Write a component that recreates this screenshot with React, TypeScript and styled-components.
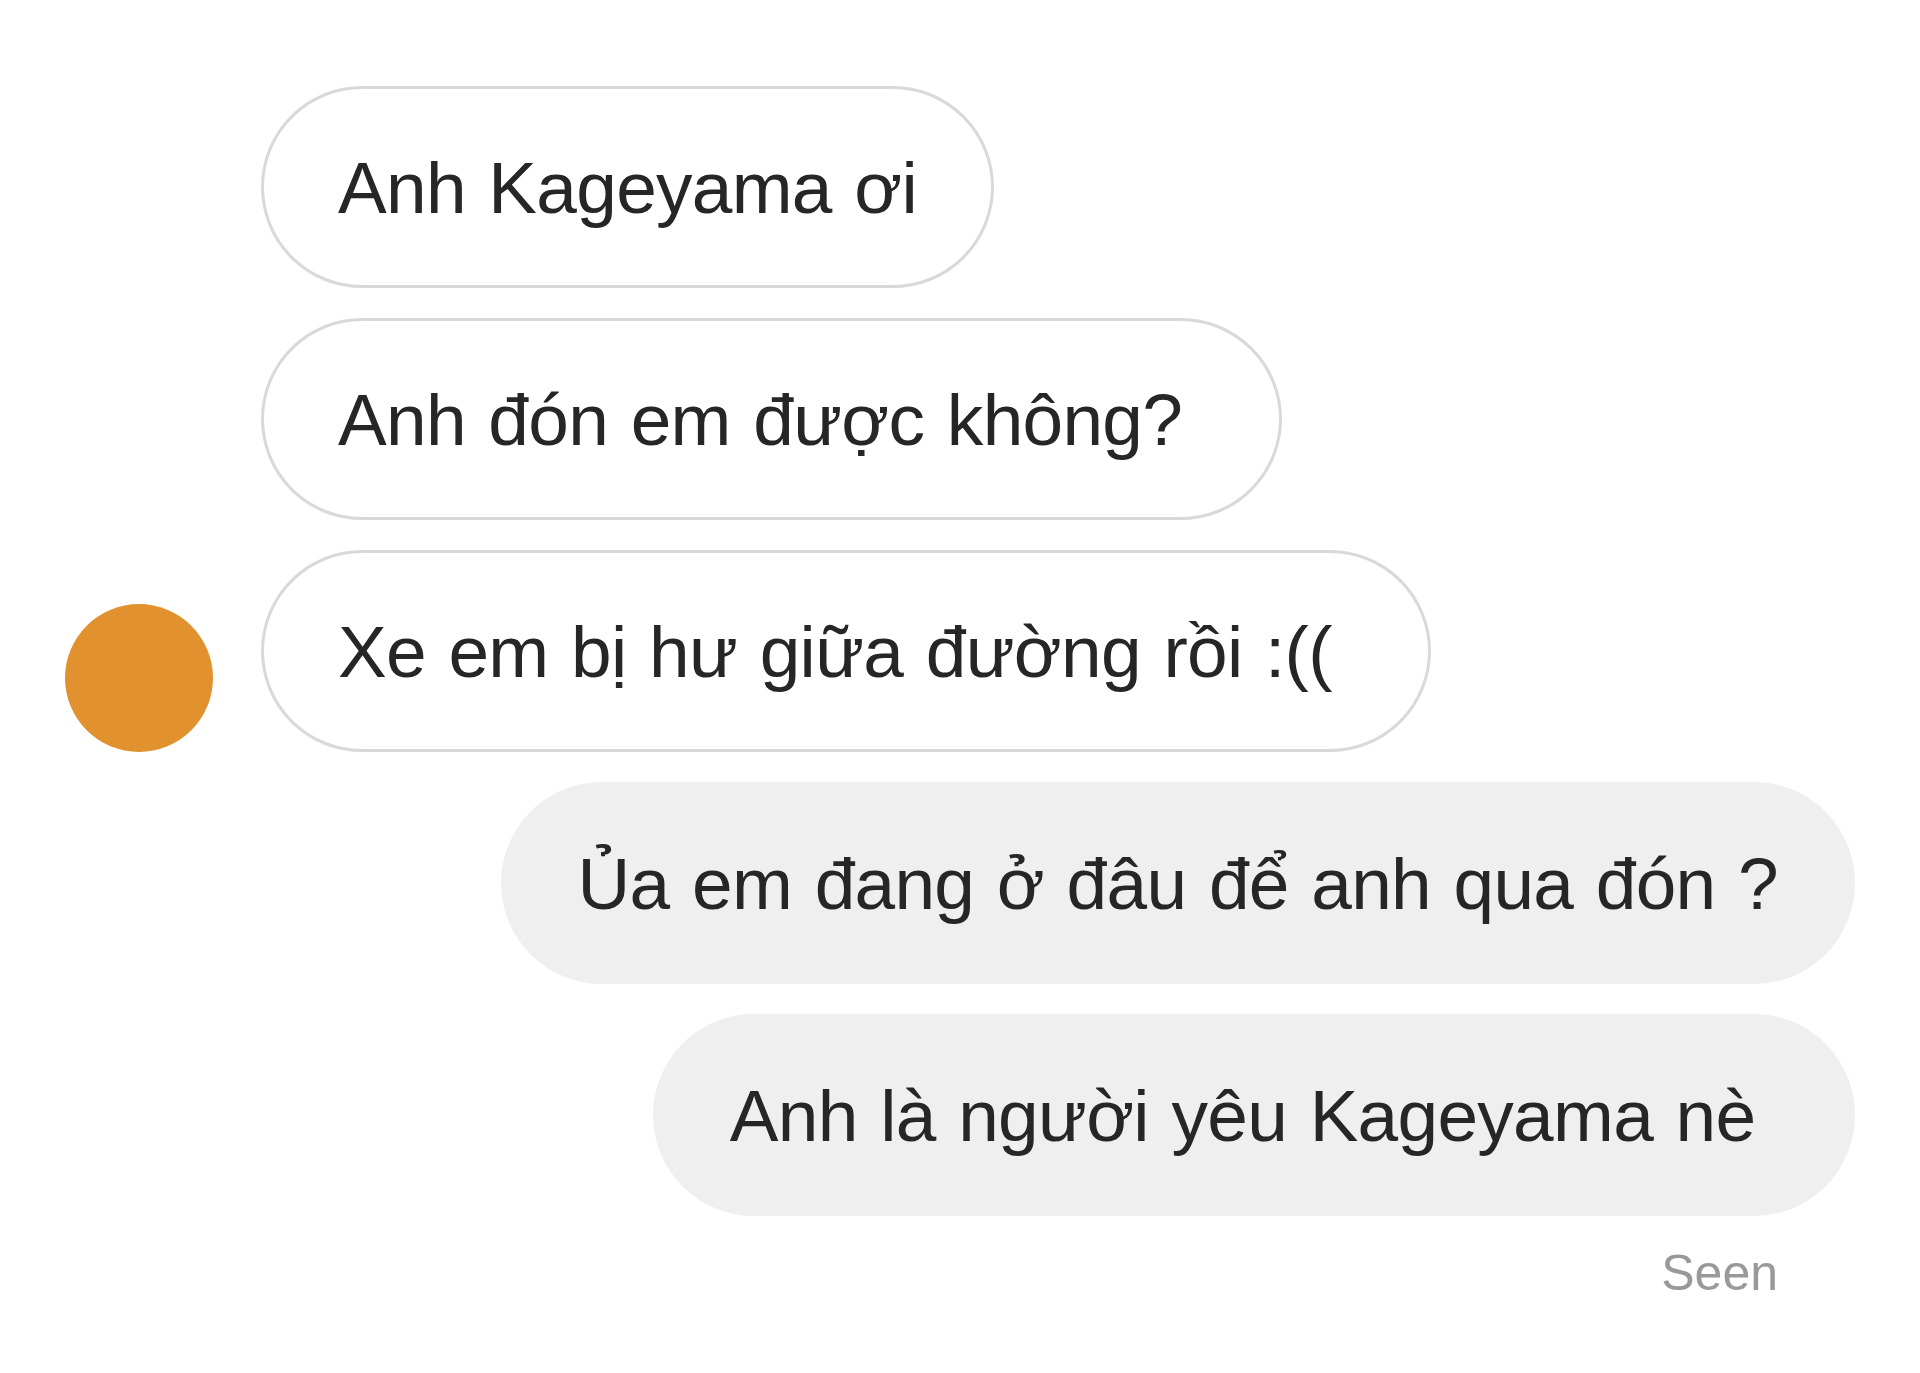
import styled, { createGlobalStyle } from 'styled-components'

const GlobalStyle = createGlobalStyle`
  html, body {
    margin: 0;
    padding: 0;
    background: #ffffff;
  }
  body {
    font-family: "Liberation Sans", Arial, sans-serif;
    color: #262626;
  }
`

type Message = {
  id: number
  text: string
  mine: boolean
}

const messages: Message[] = [
  { id: 1, text: 'Anh Kageyama ơi', mine: false },
  { id: 2, text: 'Anh đón em được không? ', mine: false },
  { id: 3, text: 'Xe em bị hư giữa đường rồi :(( ', mine: false },
  { id: 4, text: 'Ủa em đang ở đâu để anh qua đón ?', mine: true },
  { id: 5, text: 'Anh là người yêu Kageyama nè ', mine: true },
]

export default function App() {
  const lastTheirs = messages.filter((m) => !m.mine).slice(-1)[0]?.id

  return (
    <>
      <GlobalStyle />
      <Thread>
        {messages.map((m) => (
          <Row key={m.id} $mine={m.mine}>
            {!m.mine && <AvatarSlot>{m.id === lastTheirs && <Avatar />}</AvatarSlot>}
            <Bubble $mine={m.mine}>{m.text}</Bubble>
          </Row>
        ))}
        <Seen>Seen</Seen>
      </Thread>
    </>
  )
}

const Thread = styled.div`
  display: flex;
  flex-direction: column;
  gap: 30px;
  padding: 86px 65px 0 65px;
  min-height: 1373px;
  box-sizing: border-box;
`

const Row = styled.div<{ $mine: boolean }>`
  display: flex;
  align-items: flex-end;
  justify-content: ${(p) => (p.$mine ? 'flex-end' : 'flex-start')};
  gap: 48px;
`

const AvatarSlot = styled.div`
  width: 148px;
  height: 148px;
  flex-shrink: 0;
`

const Avatar = styled.div`
  width: 148px;
  height: 148px;
  border-radius: 50%;
  background: #e1922e;
`

const Bubble = styled.div<{ $mine: boolean }>`
  box-sizing: border-box;
  height: 202px;
  display: flex;
  align-items: center;
  padding: 0 74px;
  border-radius: 101px;
  white-space: pre;
  font-size: 73px;
  letter-spacing: -0.7px;
  word-spacing: 3px;
  background: ${(p) => (p.$mine ? '#efefef' : '#ffffff')};
  border: 3px solid ${(p) => (p.$mine ? '#efefef' : '#d9d9d9')};
`

const Seen = styled.div`
  align-self: flex-end;
  margin-right: 77px;
  margin-top: -2px;
  font-size: 50px;
  color: #999999;
`
